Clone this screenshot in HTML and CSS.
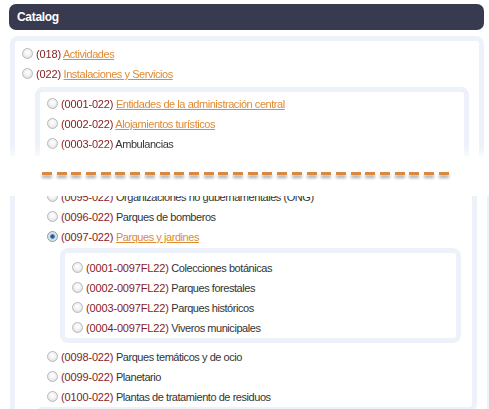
FILE: index.html
```html
<!DOCTYPE html>
<html lang="es">
<head>
<meta charset="utf-8">
<title>Catalog</title>
<link rel="stylesheet" href="styles.css">
</head>
<body>
<div class="title">Catalog</div>

<div class="clip clip-top">
  <div class="panel outer">
    <label class="row"><input type="radio" name="c"><span class="code">(018)</span> <a href="#">Actividades</a></label>
    <label class="row"><input type="radio" name="c"><span class="code">(022)</span> <a href="#">Instalaciones y Servicios</a></label>
    <div class="panel sub">
      <label class="row"><input type="radio" name="s"><span class="code">(0001-022)</span> <a href="#">Entidades de la administración central</a></label>
      <label class="row"><input type="radio" name="s"><span class="code">(0002-022)</span> <a href="#">Alojamientos turísticos</a></label>
      <label class="row"><input type="radio" name="s"><span class="code">(0003-022)</span> Ambulancias</label>
      <label class="row"><input type="radio" name="s"><span class="code">(0004-022)</span> Archivos</label>
    </div>
  </div>
</div>

<div class="tear"><div class="dash"></div></div>

<div class="clip clip-bottom">
  <div class="panel outer open">
    <div class="panel sub open">
      <label class="row first"><input type="radio" name="s"><span class="code">(0095-022)</span> Organizaciones no gubernamentales (ONG)</label>
      <label class="row"><input type="radio" name="s"><span class="code">(0096-022)</span> Parques de bomberos</label>
      <label class="row"><input type="radio" name="s" checked><span class="code">(0097-022)</span> <a href="#">Parques y jardines</a></label>
      <div class="panel sub2">
        <label class="row"><input type="radio" name="p"><span class="code">(0001-0097FL22)</span> Colecciones botánicas</label>
        <label class="row"><input type="radio" name="p"><span class="code">(0002-0097FL22)</span> Parques forestales</label>
        <label class="row"><input type="radio" name="p"><span class="code">(0003-0097FL22)</span> Parques históricos</label>
        <label class="row"><input type="radio" name="p"><span class="code">(0004-0097FL22)</span> Viveros municipales</label>
      </div>
      <label class="row"><input type="radio" name="s"><span class="code">(0098-022)</span> Parques temáticos y de ocio</label>
      <label class="row"><input type="radio" name="s"><span class="code">(0099-022)</span> Planetario</label>
      <label class="row"><input type="radio" name="s"><span class="code">(0100-022)</span> Plantas de tratamiento de residuos</label>
    </div>
  </div>
</div>
</body>
</html>
```

FILE: styles.css
```css
html, body {
  margin: 0;
  padding: 0;
  background: #fff;
}
body {
  font-family: "Liberation Sans", Arial, sans-serif;
  font-size: 11px;
  color: #333;
  overflow: hidden;
  height: 409px;
}
.title {
  margin: 4px 5px 0 9px;
  height: 26px;
  line-height: 26px;
  padding-left: 8px;
  background: #383a50;
  border-radius: 7px;
  color: #fff;
  font-weight: bold;
  font-size: 12px;
  letter-spacing: -0.3px;
}
.clip {
  overflow: hidden;
}
.clip-top {
  margin-top: 6px;
  height: 120px;
  -webkit-mask-image: linear-gradient(180deg, #000 110px, rgba(0, 0, 0, 0.4) 120px);
  mask-image: linear-gradient(180deg, #000 110px, rgba(0, 0, 0, 0.4) 120px);
}
.clip-bottom {
  height: 213px;
}
.panel {
  border: 5px solid #edf2fa;
  border-radius: 8px;
  background: #fff;
}
.outer {
  margin: 0 5px 0 10px;
  padding-top: 3px;
  min-height: 300px;
}
.sub {
  margin: 3px 10px 0 20px;
  padding-top: 2px;
  min-height: 200px;
}
.panel.open {
  border-top: none;
  border-top-left-radius: 0;
  border-top-right-radius: 0;
  padding-top: 0;
  margin-top: 0;
}
.clip-bottom .outer {
  margin-right: -3px;
}
.clip-bottom .sub {
  border-left-color: #fff;
  margin-right: 10px;
}
.sub2 {
  margin: 1px 11px 4px 20px;
  padding: 5px 0 0;
}
.row {
  display: block;
  height: 20px;
  line-height: 20px;
  padding-left: 7px;
  white-space: nowrap;
  letter-spacing: -0.45px;
}
.row.first {
  margin-top: -9px;
}
.row input {
  appearance: none;
  -webkit-appearance: none;
  display: inline-block;
  vertical-align: -1px;
  width: 11px;
  height: 11px;
  margin: 0 3px 0 0;
  border: 1px solid #b9b9b9;
  border-radius: 50%;
  background: radial-gradient(circle at 50% 40%, #ffffff 0, #f2f2f2 45%, #d4d4d4 100%);
  box-sizing: border-box;
}
.row input:checked {
  border-color: #8a9aa8;
  background: radial-gradient(circle at 50% 50%, #0d4f8a 0, #2a6ea8 28%, #cfd9e2 42%, #eef2f5 100%);
}
.code {
  color: #851b1b;
  letter-spacing: -0.15px;
}
.row a {
  color: #e08a32;
  text-decoration: underline;
}
.tear {
  height: 40px;
  box-sizing: border-box;
  padding-top: 16px;
  background: #fff;
}
.dash {
  margin: 0 37px 0 42px;
  height: 3px;
  background: repeating-linear-gradient(90deg, #d98840 0 10px, transparent 10px 14.7px);
  filter: drop-shadow(0 3px 1.5px rgba(0, 0, 0, 0.35));
}
```
